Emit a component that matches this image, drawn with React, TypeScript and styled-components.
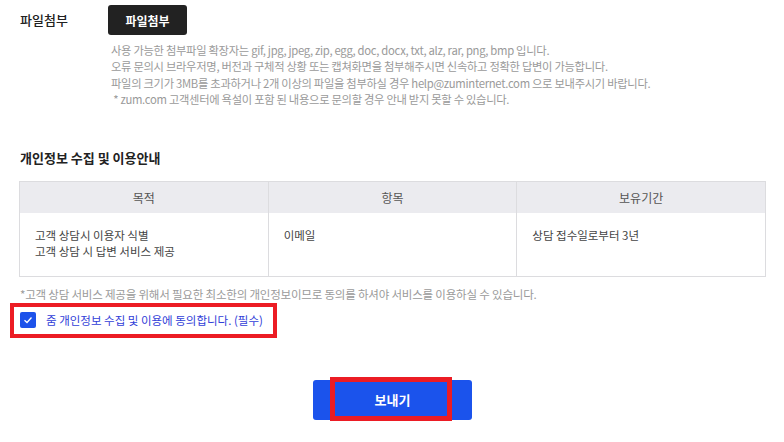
import React, { useState } from "react"
import styled, { createGlobalStyle } from "styled-components"

const GlobalStyle = createGlobalStyle`
  html, body {
    margin: 0;
    padding: 0;
    background: #fff;
  }
  body {
    font-family: "Noto Sans CJK KR", "Noto Sans", sans-serif;
    color: #222;
  }
  * {
    box-sizing: border-box;
  }
`

const Page = styled.div`
  width: 784px;
  height: 442px;
  padding: 5px 18px 0 19px;
  overflow: hidden;
`

const FileRow = styled.div`
  display: flex;
  align-items: flex-start;
`

const Label = styled.div`
  width: 89px;
  padding-left: 1px;
  font-size: 13px;
  line-height: 30px;
  font-weight: 500;
  color: #222;
`

const FileBody = styled.div`
  display: flex;
  flex-direction: column;
`

const DarkButton = styled.button`
  width: 79px;
  height: 30px;
  border: 0;
  border-radius: 3px;
  background: #222;
  color: #fff;
  font-family: inherit;
  font-size: 12px;
  font-weight: 700;
  cursor: pointer;
`

const HelpList = styled.ul`
  list-style: none;
  margin: 7px 0 0 3px;
  padding: 0;

  li {
    font-size: 11.3px;
    line-height: 16.4px;
    color: #9a9a9a;
    white-space: pre;
    letter-spacing: -0.3px;
  }
`

const SectionTitle = styled.h3`
  margin: 40px 0 0 1px;
  font-size: 13px;
  line-height: 20px;
  font-weight: 700;
  color: #222;
`

const Table = styled.table`
  margin-top: 13px;
  width: 747px;
  border-collapse: collapse;
  table-layout: fixed;
  border: 1px solid #dcdcdf;

  th {
    height: 32px;
    background: #ebebef;
    font-size: 12px;
    font-weight: 400;
    color: #555;
    border-left: 1px solid #dcdcdf;
    padding: 0;
  }

  td {
    height: 63px;
    vertical-align: top;
    padding: 14px 15px 0;
    font-size: 11.5px;
    line-height: 16px;
    color: #444;
    border-left: 1px solid #dcdcdf;
  }
`

const Note = styled.p`
  margin: 9px 0 0 1px;
  font-size: 11.5px;
  line-height: 16px;
  color: #9a9a9a;
  letter-spacing: -0.2px;
`

const Highlight = styled.div<{ $thick: number }>`
  border: ${(p) => p.$thick}px solid #ec1c24;
`

const AgreeBox = styled(Highlight)`
  display: inline-flex;
  align-items: center;
  margin: 1px 0 0 -9px;
  width: 267px;
  height: 35px;
  padding-left: 6px;
  gap: 10px;
`

const CheckMark = styled.span<{ $on: boolean }>`
  width: 16px;
  height: 16px;
  border-radius: 2px;
  background: ${(p) => (p.$on ? "#1d52ea" : "#fff")};
  border: ${(p) => (p.$on ? "0" : "1px solid #bbb")};
  display: flex;
  align-items: center;
  justify-content: center;
  cursor: pointer;
`

const AgreeText = styled.span`
  font-size: 11.5px;
  color: #3140d8;
`

const Actions = styled.div`
  display: flex;
  justify-content: center;
  margin-top: 42px;
  width: 747px;
`

const SubmitButton = styled.button`
  position: relative;
  width: 159px;
  height: 40px;
  border: 0;
  border-radius: 3px;
  background: #1b53ec;
  color: #fff;
  font-family: inherit;
  font-size: 13px;
  font-weight: 700;
  cursor: pointer;
`

const SubmitMark = styled(Highlight)`
  position: absolute;
  left: 17px;
  top: -3px;
  width: 122px;
  height: 44px;
  pointer-events: none;
`

const ButtonLabel = styled.span`
  position: relative;
`

const helpLines = [
  "사용 가능한 첨부파일 확장자는 gif, jpg, jpeg, zip, egg, doc, docx, txt, alz, rar, png, bmp 입니다.",
  "오류 문의시 브라우저명, 버전과 구체적 상황 또는 캡쳐화면을 첨부해주시면 신속하고 정확한 답변이 가능합니다.",
  "파일의 크기가 3MB를 초과하거나 2개 이상의 파일을 첨부하실 경우 help@zuminternet.com 으로 보내주시기 바랍니다.",
  " * zum.com 고객센터에 욕설이 포함 된 내용으로 문의할 경우 안내 받지 못할 수 있습니다.",
]

export default function App() {
  const [agreed, setAgreed] = useState(true)

  return (
    <Page>
      <GlobalStyle />
      <FileRow>
        <Label>파일첨부</Label>
        <FileBody>
          <DarkButton>파일첨부</DarkButton>
          <HelpList>
            {helpLines.map((line) => (
              <li key={line}>{line}</li>
            ))}
          </HelpList>
        </FileBody>
      </FileRow>

      <SectionTitle>개인정보 수집 및 이용안내</SectionTitle>
      <Table>
        <thead>
          <tr>
            <th>목적</th>
            <th>항목</th>
            <th>보유기간</th>
          </tr>
        </thead>
        <tbody>
          <tr>
            <td>
              고객 상담시 이용자 식별
              <br />
              고객 상담 시 답변 서비스 제공
            </td>
            <td>이메일</td>
            <td>상담 접수일로부터 3년</td>
          </tr>
        </tbody>
      </Table>
      <Note>*고객 상담 서비스 제공을 위해서 필요한 최소한의 개인정보이므로 동의를 하셔야 서비스를 이용하실 수 있습니다.</Note>

      <AgreeBox $thick={4}>
        <CheckMark $on={agreed} onClick={() => setAgreed(!agreed)}>
          {agreed && (
            <svg width="10" height="8" viewBox="0 0 10 8">
              <path d="M1.5 4.2 L4 6.5 L8.5 1.5" fill="none" stroke="#fff" strokeWidth="1.3" />
            </svg>
          )}
        </CheckMark>
        <AgreeText>줌 개인정보 수집 및 이용에 동의합니다. (필수)</AgreeText>
      </AgreeBox>

      <Actions>
        <SubmitButton>
          <SubmitMark $thick={5} />
          <ButtonLabel>보내기</ButtonLabel>
        </SubmitButton>
      </Actions>
    </Page>
  )
}
